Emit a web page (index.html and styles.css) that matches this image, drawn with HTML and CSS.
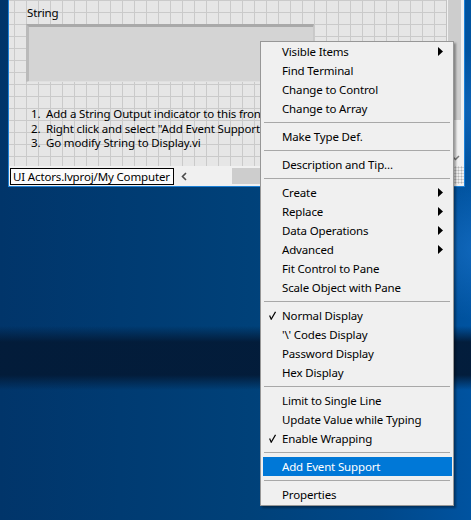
FILE: index.html
```html
<!DOCTYPE html>
<html>
<head>
<meta charset="utf-8">
<link rel="stylesheet" href="styles.css">
</head>
<body>
<div class="desktop">
  <div class="window">
    <div class="main">
      <div class="panel">
        <div class="ctl-label">String</div>
        <div class="strbox"></div>
        <div class="note">
          <div class="note-line"><span class="num">1.</span>Add a String Output indicator to this front panel</div>
          <div class="note-line"><span class="num">2.</span>Right click and select "Add Event Support"</div>
          <div class="note-line"><span class="num">3.</span>Go modify String to Display.vi</div>
        </div>
      </div>
      <div class="vscroll">
        <div class="vthumb"></div>
        <div class="vtrack">
          <svg class="down" width="9" height="6" viewBox="0 0 9 6"><polyline points="1,1 4.5,4.5 8,1" fill="none" stroke="#7a7a7a" stroke-width="1.5"/></svg>
        </div>
      </div>
    </div>
    <div class="status">
      <div class="path">UI Actors.lvproj/My Computer</div>
      <svg class="left" width="6" height="9" viewBox="0 0 6 9"><polyline points="5,1 1.5,4.5 5,8" fill="none" stroke="#4a4a4a" stroke-width="1.6"/></svg>
      <div class="hscroll"><div class="htrack"></div><div class="hthumb"></div></div>
      <div class="grip"></div>
    </div>
  </div>

  <div class="menu">
    <div class="item"><span class="gut"></span><span class="lbl">Visible Items</span><svg class="arr" width="5" height="9" viewBox="0 0 5 9"><polygon points="0,0 5,4.5 0,9" fill="#000"/></svg></div>
    <div class="item"><span class="gut"></span><span class="lbl">Find Terminal</span></div>
    <div class="item"><span class="gut"></span><span class="lbl">Change to Control</span></div>
    <div class="item"><span class="gut"></span><span class="lbl">Change to Array</span></div>
    <div class="sep"></div>
    <div class="item"><span class="gut"></span><span class="lbl">Make Type Def.</span></div>
    <div class="sep"></div>
    <div class="item"><span class="gut"></span><span class="lbl">Description and Tip...</span></div>
    <div class="sep"></div>
    <div class="item"><span class="gut"></span><span class="lbl">Create</span><svg class="arr" width="5" height="9" viewBox="0 0 5 9"><polygon points="0,0 5,4.5 0,9" fill="#000"/></svg></div>
    <div class="item"><span class="gut"></span><span class="lbl">Replace</span><svg class="arr" width="5" height="9" viewBox="0 0 5 9"><polygon points="0,0 5,4.5 0,9" fill="#000"/></svg></div>
    <div class="item"><span class="gut"></span><span class="lbl">Data Operations</span><svg class="arr" width="5" height="9" viewBox="0 0 5 9"><polygon points="0,0 5,4.5 0,9" fill="#000"/></svg></div>
    <div class="item"><span class="gut"></span><span class="lbl">Advanced</span><svg class="arr" width="5" height="9" viewBox="0 0 5 9"><polygon points="0,0 5,4.5 0,9" fill="#000"/></svg></div>
    <div class="item"><span class="gut"></span><span class="lbl">Fit Control to Pane</span></div>
    <div class="item"><span class="gut"></span><span class="lbl">Scale Object with Pane</span></div>
    <div class="sep"></div>
    <div class="item"><span class="gut"><svg width="7" height="9" viewBox="0 0 7 9"><polyline points="0.6,4.6 2.2,8.2 6.5,0.8" fill="none" stroke="#000" stroke-width="1.2"/></svg></span><span class="lbl">Normal Display</span></div>
    <div class="item"><span class="gut"></span><span class="lbl">'\' Codes Display</span></div>
    <div class="item"><span class="gut"></span><span class="lbl">Password Display</span></div>
    <div class="item"><span class="gut"></span><span class="lbl">Hex Display</span></div>
    <div class="sep"></div>
    <div class="item"><span class="gut"></span><span class="lbl">Limit to Single Line</span></div>
    <div class="item"><span class="gut"></span><span class="lbl">Update Value while Typing</span></div>
    <div class="item"><span class="gut"><svg width="7" height="9" viewBox="0 0 7 9"><polyline points="0.6,4.6 2.2,8.2 6.5,0.8" fill="none" stroke="#000" stroke-width="1.2"/></svg></span><span class="lbl">Enable Wrapping</span></div>
    <div class="sep"></div>
    <div class="item hl"><span class="gut"></span><span class="lbl">Add Event Support</span></div>
    <div class="sep"></div>
    <div class="item"><span class="gut"></span><span class="lbl">Properties</span></div>
  </div>
</div>
</body>
</html>
```
FILE: styles.css
```css
html, body {
  margin: 0;
  padding: 0;
}
body {
  width: 471px;
  height: 520px;
  overflow: hidden;
  font-family: "Noto Sans", "Open Sans", sans-serif;
  font-size: 11.5px;
  letter-spacing: -0.15px;
  color: #000;
}
.desktop {
  position: relative;
  width: 471px;
  height: 520px;
  background:
    linear-gradient(180deg, rgba(3,26,54,0) 326px, rgba(3,27,56,0.96) 342px, rgba(3,27,56,0.96) 375px, rgba(3,26,54,0) 390px),
    radial-gradient(circle at 478px 250px, rgba(30,120,210,0.55), rgba(30,120,210,0) 70px),
    radial-gradient(circle at 478px 110px, rgba(30,120,210,0.45), rgba(30,120,210,0) 60px),
    linear-gradient(90deg, #01356a 0px, #003b72 120px, #004179 250px, #00488a 380px, #0053a0 471px);
}
.window {
  position: absolute;
  left: 8px;
  top: 0;
  width: 455px;
  border: 1px solid #1c80d6;
  border-top: none;
  background: #f0f0f0;
  display: flex;
  flex-direction: column;
}
.main {
  display: flex;
  height: 166px;
}
.panel {
  width: 438px;
  height: 166px;
  border-right: 1px solid #c2c2c2;
  background-color: #e6e6e6;
  background-image:
    linear-gradient(90deg, #cacaca 1px, transparent 1px),
    linear-gradient(180deg, #cacaca 1px, transparent 1px);
  background-size: 12px 12px, 12px 12px;
  background-position: 5px 0, 0 0;
  display: flex;
  flex-direction: column;
  padding-left: 17px;
  box-sizing: border-box;
}
.ctl-label {
  margin-top: 5px;
  margin-left: 1px;
  height: 19px;
  line-height: 16px;
}
.strbox {
  width: 288px;
  height: 58px;
  box-sizing: border-box;
  background: #d4d4d4;
  border-top: 3px solid #a9a9a9;
  border-left: 3px solid #bababa;
  border-bottom: 1px solid #e0e0e0;
  border-right: 1px solid #c8c8c8;
}
.note {
  margin-top: 25px;
  margin-left: 5px;
  line-height: 14.5px;
}
.num {
  display: inline-block;
  width: 15px;
}
.vscroll {
  width: 16px;
  display: flex;
  flex-direction: column;
  background: #f0f0f0;
}
.vthumb {
  height: 120px;
  margin: 0 2px 0 1px;
  background: #cdcdcd;
}
.vtrack {
  flex: 1;
  display: flex;
  align-items: flex-end;
  justify-content: center;
  padding-bottom: 5px;
}
.status {
  height: 20px;
  display: flex;
  align-items: flex-start;
  background: #f0f0f0;
}
.path {
  margin-top: 2px;
  margin-left: 1px;
  height: 17px;
  box-sizing: border-box;
  width: 164px;
  border: 1px solid #000;
  background: #fbfbfb;
  line-height: 15px;
  padding-left: 2px;
  white-space: nowrap;
  overflow: hidden;
}
.left {
  margin: 6px 0 0 7px;
}
.hscroll {
  margin: 2px 0 0 5px;
  height: 16px;
  flex: 1;
  display: flex;
}
.htrack {
  width: 40px;
  background: #f0f0f0;
}
.hthumb {
  width: 190px;
  background: #cdcdcd;
}
.grip {
  width: 14px;
  height: 18px;
  margin-left: auto;
  background-image: radial-gradient(circle, #b4b4b4 0.9px, transparent 1.1px);
  background-size: 3px 3px;
  background-position: 4px 6px;
}
.menu {
  position: absolute;
  left: 260px;
  top: 41px;
  width: 192px;
  border: 1px solid #979797;
  background: #f0f0f0;
  padding: 0 0 1px 0;
  box-shadow: 2px 2px 2px rgba(0,0,0,0.35);
}
.item {
  height: 19px;
  display: flex;
  align-items: center;
  line-height: 19px;
  white-space: nowrap;
}
.gut {
  width: 21px;
  flex: none;
  display: flex;
  align-items: center;
  padding-left: 8px;
  box-sizing: border-box;
  height: 19px;
}
.lbl {
  flex: 1;
}
.arr {
  margin-right: 10px;
}
.sep {
  height: 1px;
  margin: 4px 3px;
  background: #a8a8a8;
}
.item.hl {
  background: #0078d7;
  color: #fff;
  margin: 0 1px 0 2px;
}
.item.hl .gut {
  width: 19px;
}
```
